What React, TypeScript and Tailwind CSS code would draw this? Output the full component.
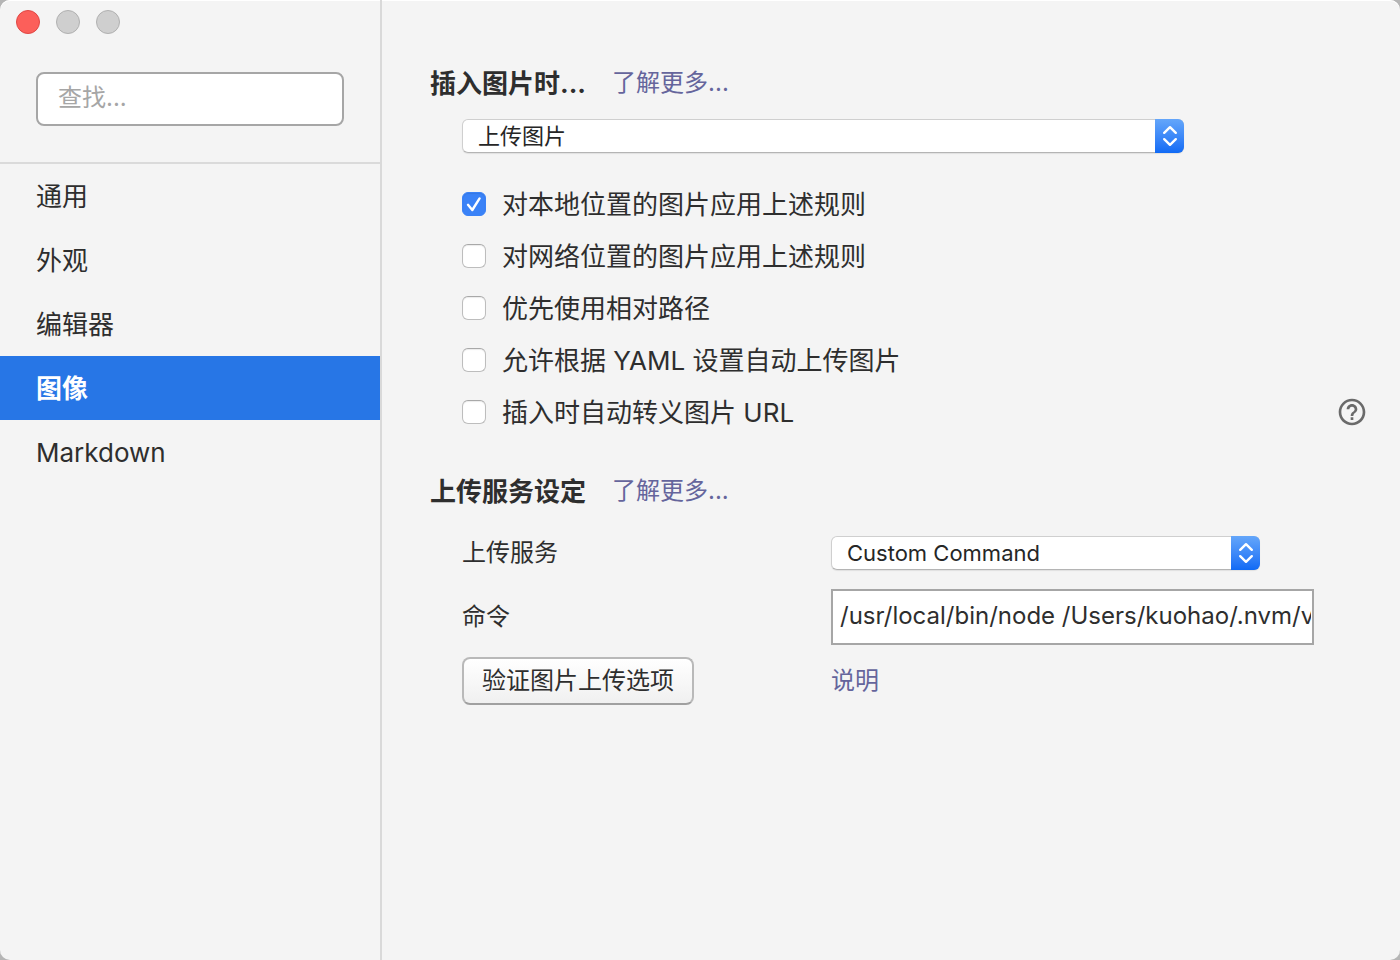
import { useState } from "react";
import type { ReactNode } from "react";
import { MdHelpOutline } from "react-icons/md";

interface SelectBoxProps {
  id: string;
  label?: string;
  value: string;
  options: string[];
  className: string;
  onChange: (value: string) => void;
}

interface ImageRule {
  id: string;
  label: string;
  help?: boolean;
}

const NAV_ITEMS = ["通用", "外观", "编辑器", "图像", "Markdown"];

const IMAGE_RULES: ImageRule[] = [
  { id: "local", label: "对本地位置的图片应用上述规则" },
  { id: "network", label: "对网络位置的图片应用上述规则" },
  { id: "relative", label: "优先使用相对路径" },
  { id: "yaml", label: "允许根据 YAML 设置自动上传图片" },
  { id: "escape", label: "插入时自动转义图片 URL", help: true },
];

const INSERT_ACTIONS = ["上传图片", "无特殊操作", "复制到指定路径"];
const UPLOAD_SERVICES = ["Custom Command", "iPic", "uPic", "PicGo.app"];

const SelectBox = ({ id, label, value, options, className, onChange }: SelectBoxProps) => (
  <div className={`relative h-[34px] ${className}`}>
    <select
      id={id}
      aria-label={label}
      value={value}
      onChange={(event) => onChange(event.target.value)}
      className="block h-full w-full appearance-none rounded-md border border-[#cfcfcf] border-b-[#b4b4b4] bg-white pr-10 pl-[15px] text-[22px] leading-8 text-[#262626] shadow-[0_1px_1px_rgba(0,0,0,0.08)] outline-none"
    >
      {options.map((option) => (
        <option key={option}>{option}</option>
      ))}
    </select>
    <span className="pointer-events-none absolute inset-y-0 right-0 flex w-[29px] items-center justify-center rounded-r-md bg-linear-to-b from-[#64a6fa] to-[#0f6af5]">
      <svg width="16" height="24" viewBox="0 0 16 24" fill="none" stroke="white" strokeWidth="2.4">
        <path d="M2.2 8.8 8 3.2l5.8 5.6M2.2 15.2l5.8 5.6 5.8-5.6" strokeLinecap="round" strokeLinejoin="round" />
      </svg>
    </span>
  </div>
);

const TextLink = ({ children }: { children: ReactNode }) => (
  <a href="#" className="text-2xl text-[#65659c]">
    {children}
  </a>
);

const SectionHeading = ({ title }: { title: string }) => (
  <div className="flex h-10 items-center gap-[26px]">
    <h2 className="text-[26px] font-bold">{title}</h2>
    <TextLink>了解更多...</TextLink>
  </div>
);

const App = () => {
  const [activeNav, setActiveNav] = useState("图像");
  const [insertAction, setInsertAction] = useState(INSERT_ACTIONS[0]);
  const [service, setService] = useState(UPLOAD_SERVICES[0]);
  const [command, setCommand] = useState("/usr/local/bin/node /Users/kuohao/.nvm/versions/node");
  const [checkedRules, setCheckedRules] = useState<Record<string, boolean>>({ local: true });

  return (
    <div className="bg-[#b5b5b5] font-['Inter','Noto_Sans_CJK_SC',sans-serif] text-[#2e2e2e]">
      <div className="flex min-h-screen overflow-hidden rounded-[10px] bg-[#f4f4f4] shadow-[inset_0_1px_0_#ffffff]">
        <aside className="w-[382px] shrink-0 border-r-2 border-[#d9d9d9]">
          <div className="flex gap-4 px-4 pt-2.5">
            <button type="button" aria-label="关闭" className="size-6 rounded-full border border-[#df4744] bg-[#fc5f5a]" />
            <button type="button" aria-label="最小化" className="size-6 rounded-full border border-[#b0b0b0] bg-[#cfcfcf]" />
            <button type="button" aria-label="缩放" className="size-6 rounded-full border border-[#b0b0b0] bg-[#cfcfcf]" />
          </div>
          <div className="border-b-2 border-[#dadada] px-9 pt-[38px] pb-9">
            <input
              type="search"
              aria-label="查找"
              placeholder="查找..."
              className="block h-[54px] w-full rounded-lg border-2 border-[#a6a6a6] bg-white px-5 pb-1 text-2xl outline-none placeholder:text-[#a6a6a6]"
            />
          </div>
          <nav>
            {NAV_ITEMS.map((item) => (
              <button
                key={item}
                type="button"
                onClick={() => setActiveNav(item)}
                className={`flex h-16 w-full items-center px-9 text-left text-[26px] ${
                  item === activeNav ? "bg-[#2776e6] font-bold text-white" : ""
                }`}
              >
                {item}
              </button>
            ))}
          </nav>
        </aside>

        <main className="min-w-0 flex-1 pt-[63px] pr-8 pl-12">
          <section>
            <SectionHeading title="插入图片时..." />
            <div className="mt-4 pl-8">
              <SelectBox
                id="insert-action"
                label="插入图片时"
                value={insertAction}
                options={INSERT_ACTIONS}
                onChange={setInsertAction}
                className="w-full max-w-[722px]"
              />
            </div>
            <ul className="mt-[25px] pl-8">
              {IMAGE_RULES.map((rule) => (
                <li key={rule.id} className="flex h-[52px] items-center justify-between">
                  <label className="flex items-center gap-4 text-[26px]">
                    <span className="grid size-6 place-items-center">
                      <input
                        type="checkbox"
                        checked={!!checkedRules[rule.id]}
                        onChange={(event) => {
                          const { checked } = event.target;
                          setCheckedRules((prev) => ({ ...prev, [rule.id]: checked }));
                        }}
                        className="peer col-start-1 row-start-1 size-6 appearance-none rounded-md border border-[#bdbdbd] border-t-[#a8a8a8] bg-white shadow-[inset_0_1px_1px_rgba(0,0,0,0.08)] checked:border-[#3a82f7] checked:bg-[#3a82f7]"
                      />
                      <svg
                        viewBox="0 0 24 24"
                        fill="none"
                        stroke="white"
                        strokeWidth="2.4"
                        strokeLinecap="round"
                        strokeLinejoin="round"
                        className="pointer-events-none invisible col-start-1 row-start-1 size-6 peer-checked:visible"
                      >
                        <path d="M6 12.8 10.3 18 17.6 6.4" />
                      </svg>
                    </span>
                    {rule.label}
                  </label>
                  {rule.help ? (
                    <button type="button" aria-label="帮助" className="text-[#6a6a6a]">
                      <MdHelpOutline className="size-8" />
                    </button>
                  ) : null}
                </li>
              ))}
            </ul>
          </section>

          <section className="mt-[33px]">
            <SectionHeading title="上传服务设定" />
            <div className="mt-2.5 grid auto-rows-[64px] grid-cols-[369px_1fr] items-center pl-8 text-2xl">
              <label htmlFor="upload-service">上传服务</label>
              <SelectBox
                id="upload-service"
                value={service}
                options={UPLOAD_SERVICES}
                onChange={setService}
                className="w-full max-w-[429px]"
              />
              <label htmlFor="upload-command">命令</label>
              <input
                id="upload-command"
                type="text"
                value={command}
                onChange={(event) => setCommand(event.target.value)}
                className="h-14 w-full max-w-[483px] border-2 border-[#a6a6a6] bg-white pr-px pb-1 pl-[7px] text-2xl outline-none"
              />
              <div>
                <button
                  type="button"
                  className="flex h-12 items-center rounded-lg border-2 border-[#b9b9b9] border-b-[#a0a0a0] bg-linear-to-b from-white to-[#f0f0f0] px-[18px]"
                >
                  验证图片上传选项
                </button>
              </div>
              <TextLink>说明</TextLink>
            </div>
          </section>
        </main>
      </div>
    </div>
  );
};

export default App;
